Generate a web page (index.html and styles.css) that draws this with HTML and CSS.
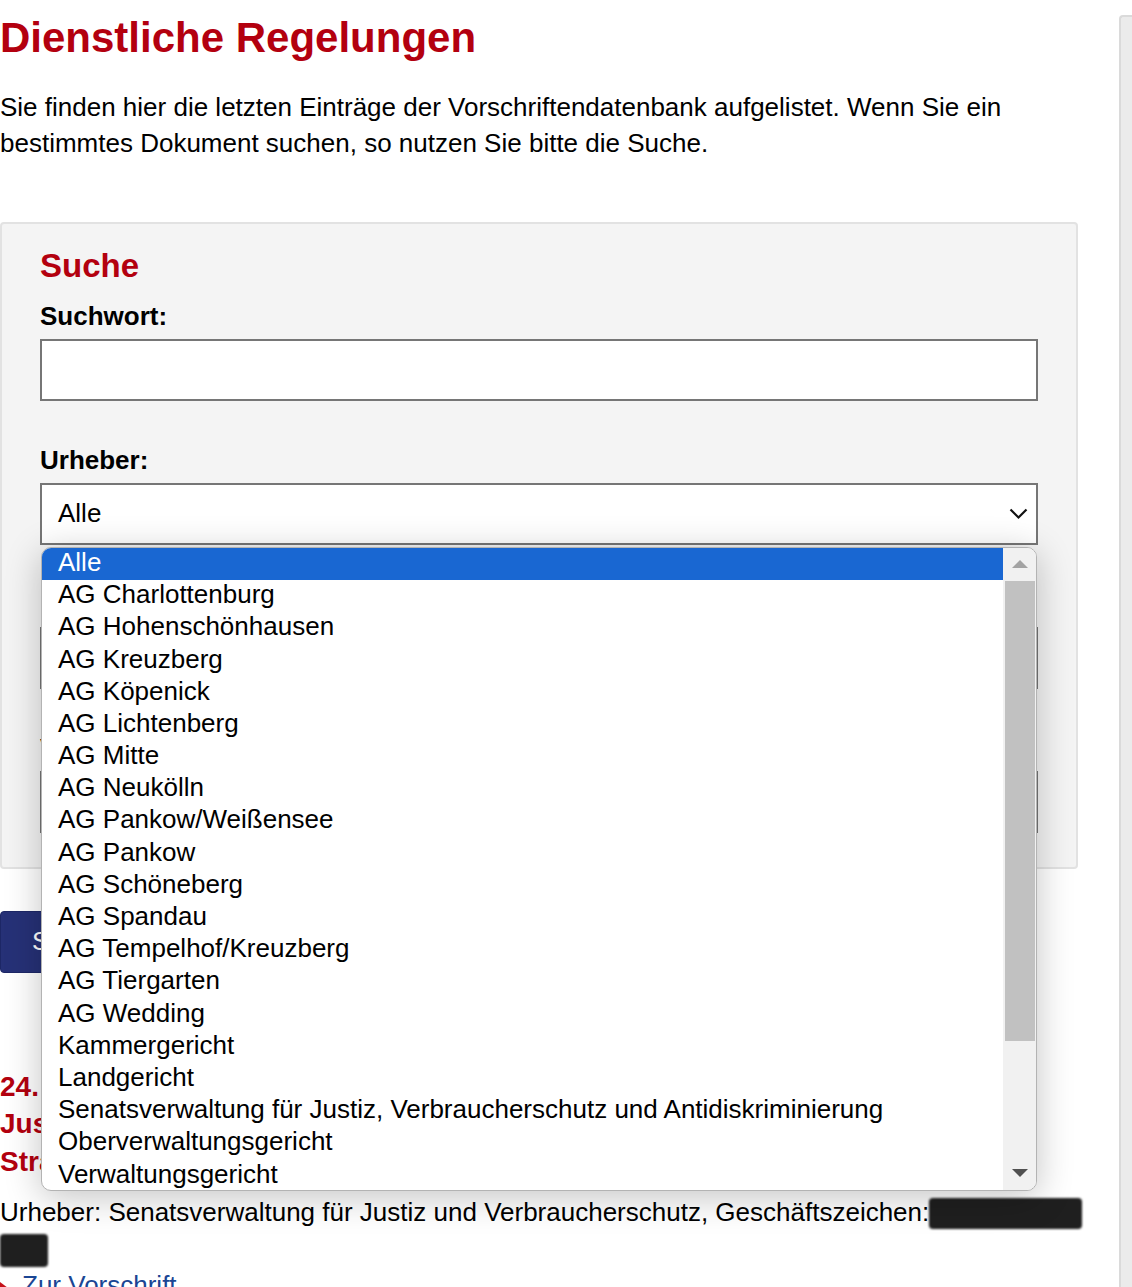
FILE: index.html
```html
<!DOCTYPE html>
<html lang="de">
<head>
<meta charset="utf-8">
<title>Dienstliche Regelungen</title>
<link rel="stylesheet" href="styles.css">
</head>
<body>
<div class="page">
  <main class="main">
    <h1 class="title">Dienstliche Regelungen</h1>
    <p class="intro">Sie finden hier die letzten Einträge der Vorschriftendatenbank aufgelistet. Wenn Sie ein bestimmtes Dokument suchen, so nutzen Sie bitte die Suche.</p>

    <form class="search-card">
      <h2 class="search-title">Suche</h2>
      <div class="field">
        <label class="label">Suchwort:</label>
        <div class="input"></div>
      </div>
      <div class="field">
        <label class="label">Urheber:</label>
        <div class="select-wrap">
          <div class="select">
            <span>Alle</span>
            <svg class="chev" width="19" height="12" viewBox="0 0 19 12"><polyline points="1.5,1.5 9.5,9.5 17.5,1.5" fill="none" stroke="#111" stroke-width="2.2"/></svg>
          </div>
          <div class="popup">
            <div class="options">
              <div class="opt sel">Alle</div>
              <div class="opt">AG Charlottenburg</div>
              <div class="opt">AG Hohenschönhausen</div>
              <div class="opt">AG Kreuzberg</div>
              <div class="opt">AG Köpenick</div>
              <div class="opt">AG Lichtenberg</div>
              <div class="opt">AG Mitte</div>
              <div class="opt">AG Neukölln</div>
              <div class="opt">AG Pankow/Weißensee</div>
              <div class="opt">AG Pankow</div>
              <div class="opt">AG Schöneberg</div>
              <div class="opt">AG Spandau</div>
              <div class="opt">AG Tempelhof/Kreuzberg</div>
              <div class="opt">AG Tiergarten</div>
              <div class="opt">AG Wedding</div>
              <div class="opt">Kammergericht</div>
              <div class="opt">Landgericht</div>
              <div class="opt">Senatsverwaltung für Justiz, Verbraucherschutz und Antidiskriminierung</div>
              <div class="opt">Oberverwaltungsgericht</div>
              <div class="opt">Verwaltungsgericht</div>
              <div class="opt">Sozialgericht</div>
            </div>
            <div class="sb">
              <div class="sb-btn"><span class="tri-up"></span></div>
              <div class="sb-thumb"></div>
              <div class="sb-track"></div>
              <div class="sb-btn"><span class="tri-down"></span></div>
            </div>
          </div>
        </div>
      </div>
      <div class="field">
        <label class="label">Bereich:</label>
        <div class="select"><span>Alle</span></div>
      </div>
      <div class="field">
        <label class="label">Volltext:</label>
        <div class="input"></div>
      </div>
    </form>

    <button class="btn" type="button">Suchen</button>

    <article class="entry">
      <h3 class="entry-title">24. Juni 2022 – Ausführungsvorschriften über<br>Justizvollzugsanstalten des Landes Berlin<br>Strafvollzug</h3>
      <p class="meta"><span class="nowrap">Urheber: Senatsverwaltung für Justiz und Verbraucherschutz, Geschäftszeichen:<span class="redact r1"></span></span><br><span class="redact r2"></span></p>
      <a class="more" href="#"><span class="bullet"></span>Zur Vorschrift</a>
    </article>
  </main>
  <aside class="sidebar"></aside>
</div>
</body>
</html>
```

FILE: styles.css
```css
html {
  overflow: hidden;
}

body {
  margin: 0;
  font-family: "Liberation Sans", Arial, sans-serif;
  font-size: 26px;
  color: #000;
  background: #fff;
}

.page {
  display: flex;
  gap: 41px;
  min-height: 1287px;
}

.main {
  width: 1078px;
  flex: none;
}

.sidebar {
  flex: 1;
  margin-top: 15px;
  background: #ebebeb;
  border-left: 2px solid #dadada;
  border-top: 2px solid #dadada;
  border-top-left-radius: 4px;
}

.title {
  margin: 14px 0 0;
  font-size: 42px;
  line-height: 48px;
  font-weight: bold;
  color: #b3000f;
}

.intro {
  margin: 27px 0 0;
  line-height: 36px;
}

.search-card {
  margin-top: 61px;
  background: #f4f4f4;
  border: 2px solid #e2e2e2;
  border-radius: 4px;
  padding: 23px 38px 34px;
}

.search-title {
  margin: 0;
  font-size: 33px;
  line-height: 38px;
  font-weight: bold;
  color: #b3000f;
}

.field {
  margin-top: 43.6px;
}

.search-title + .field {
  margin-top: 15.6px;
}

.label {
  display: block;
  font-weight: bold;
  line-height: 30px;
  margin-bottom: 8.4px;
}

.input,
.select {
  height: 62px;
  box-sizing: border-box;
  border: 2px solid #767676;
  background: #fff;
}

.select {
  display: flex;
  align-items: center;
  justify-content: space-between;
  padding: 0 8px 0 16px;
}

.chev {
  display: block;
}

.select-wrap {
  position: relative;
}

.popup {
  position: absolute;
  top: calc(100% + 2px);
  left: 1px;
  right: 1px;
  height: 644px;
  box-sizing: border-box;
  border: 1px solid #b3b3b3;
  border-radius: 10px;
  background: #fff;
  box-shadow: 0 6px 36px rgba(0, 0, 0, 0.24);
  display: flex;
  overflow: hidden;
  z-index: 10;
}

.options {
  flex: 1;
  overflow: hidden;
}

.opt {
  height: 32.2px;
  line-height: 29px;
  padding-left: 16px;
  white-space: nowrap;
}

.opt.sel {
  background: #1967d2;
  color: #fff;
}

.sb {
  width: 33px;
  flex: none;
  background: #f1f1f1;
  display: flex;
  flex-direction: column;
}

.sb-btn {
  height: 33px;
  flex: none;
  display: flex;
  align-items: center;
  justify-content: center;
}

.tri-up {
  width: 0;
  height: 0;
  border-left: 8px solid transparent;
  border-right: 8px solid transparent;
  border-bottom: 8px solid #a3a3a3;
}

.tri-down {
  width: 0;
  height: 0;
  border-left: 8px solid transparent;
  border-right: 8px solid transparent;
  border-top: 8px solid #505050;
}

.sb-thumb {
  height: 460px;
  flex: none;
  margin: 0 1px 0 2px;
  background: #c1c1c1;
}

.sb-track {
  flex: 1;
}

.btn {
  display: block;
  margin-top: 42px;
  height: 62px;
  padding: 0 31px;
  background: #263177;
  color: #fff;
  border: 1px solid #1d2766;
  border-radius: 4px;
  font: inherit;
}

.entry {
  margin-top: 95px;
}

.entry-title {
  margin: 0;
  font-size: 28px;
  line-height: 37.5px;
  font-weight: bold;
  color: #b3000f;
}

.meta {
  margin: 14px 0 0;
  line-height: 36px;
}

.nowrap {
  white-space: nowrap;
}

.redact {
  display: inline-block;
  background: #1f1f1f;
  border-radius: 4px;
  filter: blur(1px);
}

.r1 {
  width: 153px;
  height: 31px;
  vertical-align: -8px;
}

.r2 {
  width: 48px;
  height: 33px;
  vertical-align: -10px;
}

.more {
  display: block;
  line-height: 36px;
  color: #1b4694;
  text-decoration: none;
}

.bullet {
  display: inline-block;
  width: 0;
  height: 0;
  border-left: 8px solid #c5111a;
  border-top: 6px solid transparent;
  border-bottom: 6px solid transparent;
  margin-right: 14px;
  vertical-align: middle;
}
```
